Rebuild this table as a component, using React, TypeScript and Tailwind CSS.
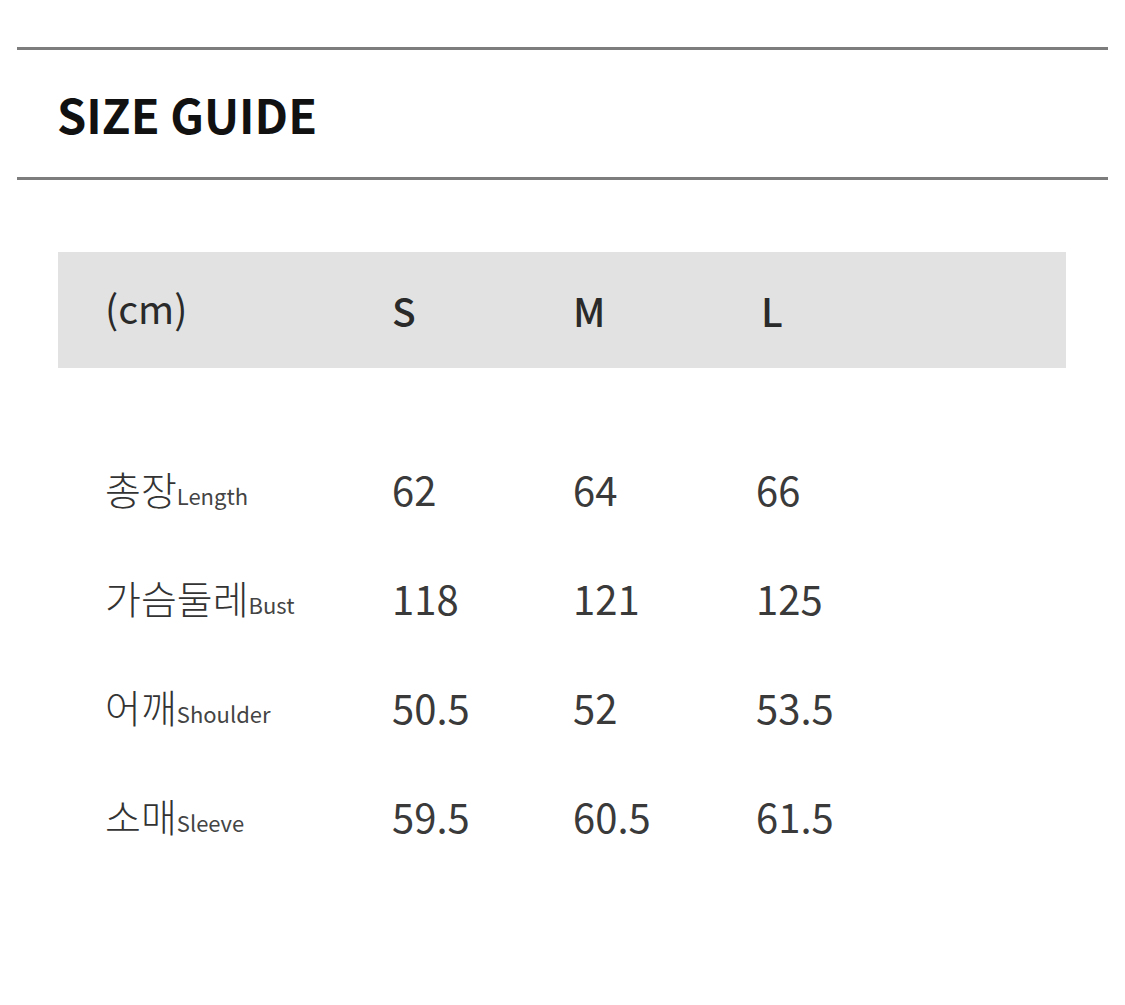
const rows = [
  { ko: '총장', en: 'Length', s: '62', m: '64', l: '66' },
  { ko: '가슴둘레', en: 'Bust', s: '118', m: '121', l: '125' },
  { ko: '어깨', en: 'Shoulder', s: '50.5', m: '52', l: '53.5' },
  { ko: '소매', en: 'Sleeve', s: '59.5', m: '60.5', l: '61.5' },
];

const font = { fontFamily: '"Noto Sans CJK KR", "Noto Sans", sans-serif' };

export default function App() {
  return (
    <div className="w-[1125px] h-[1005px] bg-white overflow-hidden" style={font}>
      {/* Title */}
      <div className="mt-[47px] mx-[17px] h-[3px] bg-[#7d7d7d]" />
      <div className="h-[127px] flex items-center pl-[57px]">
        <h1 className="text-[47px] font-bold text-[#111] leading-none">SIZE GUIDE</h1>
      </div>
      <div className="mx-[17px] h-[3px] bg-[#7d7d7d]" />

      {/* Table header */}
      <div className="mt-[72px] ml-[58px] mr-[59px] h-[116px] bg-[#e2e2e2] grid grid-cols-[287px_181px_183px_1fr] items-center pl-[47px] text-[39px] text-[#2a2a2a] leading-none">
        <div className="-mt-[6px]">(cm)</div>
        <div className="font-medium">S</div>
        <div className="font-medium">M</div>
        <div className="font-medium pl-[5px]">L</div>
      </div>

      {/* Rows */}
      <div className="mt-[66px] ml-[58px] mr-[59px]">
        {rows.map((r) => (
          <div
            key={r.ko}
            className="h-[109px] grid grid-cols-[287px_181px_183px_1fr] items-center pl-[47px] text-[40px] text-[#3a3a3a] leading-none"
          >
            <div className="flex items-baseline">
              <span className="font-light text-[39px] text-[#333]">{r.ko}</span>
              <span className="text-[22px] text-[#444]">{r.en}</span>
            </div>
            <div>{r.s}</div>
            <div>{r.m}</div>
            <div>{r.l}</div>
          </div>
        ))}
      </div>
    </div>
  );
}
